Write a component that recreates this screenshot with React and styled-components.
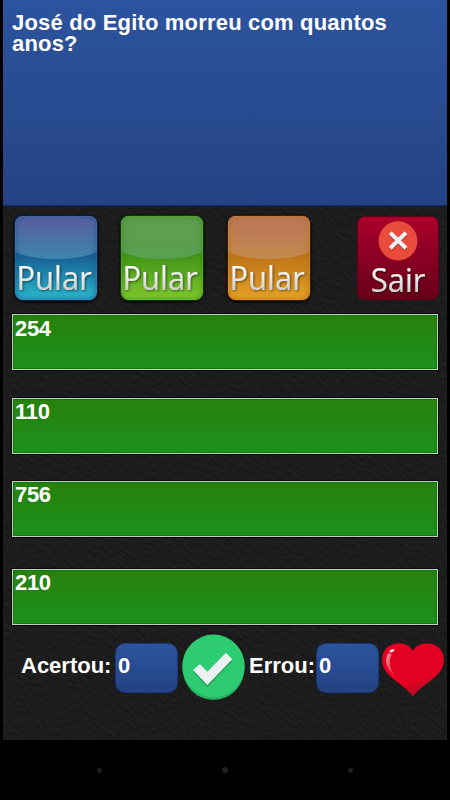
import React from 'react';
import styled, { createGlobalStyle } from 'styled-components';

const leather = encodeURIComponent(`
<svg xmlns="http://www.w3.org/2000/svg" width="444" height="740">
	<filter id="l" x="0" y="0" width="100%" height="100%" color-interpolation-filters="sRGB">
		<feTurbulence type="fractalNoise" baseFrequency="0.17 0.3" numOctaves="3" seed="8"/>
		<feDiffuseLighting surfaceScale="0.7" diffuseConstant="0.142" lighting-color="#ffffff">
			<feDistantLight azimuth="250" elevation="52"/>
		</feDiffuseLighting>
	</filter>
	<g transform="rotate(38 222 370)">
		<rect x="-300" y="-200" width="1050" height="1150" filter="url(#l)"/>
	</g>
</svg>`);

const COLORS = {
	blue: ['#5c5c9e', '#3c87ab', '#16568e', '#2ab3c9', '#0b1c3c'],
	green: ['#5f9d50', '#5a9f50', '#3b8f17', '#7dc62b', '#123507'],
	orange: ['#b9755a', '#c58a4c', '#b96f18', '#e3a024', '#3a1c08'],
};

const skips = ['blue', 'green', 'orange'];
const answers = ['254', '110', '756', '210'];

const App = () => {
	return (
		<Device>
			<GlobalStyle />
			<Game>
				<Question>José do Egito morreu com quantos anos?</Question>
				<Toolbar>
					{skips.map((tone) => (
						<SkipButton key={tone} $tone={COLORS[tone]}>
							<Label>Pular</Label>
						</SkipButton>
					))}
					<ExitButton>
						<CloseIcon />
						<Label $exit>Sair</Label>
					</ExitButton>
				</Toolbar>
				<Answers>
					{answers.map((answer) => (
						<Answer key={answer}>{answer}</Answer>
					))}
				</Answers>
				<Score>
					<ScoreLabel $width='94px'>Acertou:</ScoreLabel>
					<Counter>0</Counter>
					<CheckIcon />
					<ScoreLabel $width='67px'>Errou:</ScoreLabel>
					<Counter>0</Counter>
					<HeartIcon />
				</Score>
			</Game>
			<NavBar>
				<Dot />
				<Dot $size='6px' />
				<Dot />
			</NavBar>
		</Device>
	);
};

export default App;

const CloseIcon = () => (
	<CloseSvg viewBox='0 0 40 40'>
		<circle cx='20' cy='20.4' r='19.4' fill='#c9372f' />
		<circle cx='20' cy='19.6' r='19.3' fill='#e94b3c' />
		<path d='M12.3 13.3 28 28.5M28 13.3 12.3 28.5' stroke='#a72f2b' strokeWidth='3.8' />
		<path d='M12.2 11.8 28 27.2M28 11.8 12.2 27.2' stroke='#eef1f1' strokeWidth='4' />
	</CloseSvg>
);

const CheckIcon = () => (
	<CheckSvg viewBox='0 0 63 66'>
		<ellipse cx='31.5' cy='34' rx='31' ry='32' fill='#27ae60' />
		<ellipse cx='31.5' cy='32' rx='31.2' ry='31.5' fill='#2ecc71' />
		<path d='M11 38 18 32 25.3 39.7 44 20.7 50.3 27.3 25.3 53.3Z' fill='#25a65a' />
		<path d='M11 36 18 30 25.3 37.7 44 18.7 50.3 25.3 25.3 51Z' fill='#ecf0f1' />
	</CheckSvg>
);

const HeartIcon = () => (
	<HeartSvg viewBox='0 0 62 54'>
		<defs>
			<linearGradient id='heart' x1='0.35' y1='0.2' x2='0.65' y2='1'>
				<stop offset='0.62' stopColor='#e30022' />
				<stop offset='0.76' stopColor='#cf0823' />
				<stop offset='1' stopColor='#a80b20' />
			</linearGradient>
			<linearGradient id='shine' x1='0' y1='0' x2='0.5' y2='1'>
				<stop offset='0' stopColor='#f79aa4' />
				<stop offset='1' stopColor='#ea2840' />
			</linearGradient>
		</defs>
		<path
			d='M31 8C27-.6 14-2.4 5.5 4-1.8 10.5-1.2 22.5 4.6 29.5 11.6 38 24 44 31 53.2 38 44 50.4 38 57.4 29.5 63.2 22.5 63.8 10.5 56.5 4 48-2.4 35-.6 31 8Z'
			fill='url(#heart)'
		/>
		<path d='M6 10.5C2 17.5 4.3 27 12.5 32 7.5 25 6.5 17.5 9.8 11Z' fill='url(#shine)' />
		<ellipse cx='9.9' cy='7.8' rx='2.7' ry='1.4' transform='rotate(-25 9.9 7.8)' fill='#ffe1e4' />
	</HeartSvg>
);

const GlobalStyle = createGlobalStyle`
	* {
		box-sizing: border-box;
	}

	body {
		margin: 0;
		background: #000;
	}
`;

const Device = styled.div`
	width: 450px;
	height: 800px;
	display: flex;
	flex-direction: column;
	background: #000;
	overflow: hidden;
	font-family: 'Liberation Sans', Arial, sans-serif;
	font-size: 22px;
	font-weight: bold;
	line-height: 21px;
	color: #fff;
`;

const Game = styled.main`
	width: 444px;
	height: 740px;
	margin: 0 auto;
	display: flex;
	flex-direction: column;
	background: #1c1c1c url("data:image/svg+xml,${leather}");
`;

const Question = styled.header`
	height: 206px;
	padding: 13px 40px 0 9px;
	line-height: 20.5px;
	letter-spacing: 0.18px;
	background: linear-gradient(#2c549e, #244284);
	border-bottom: 1px solid #0d2b6e;
`;

const Toolbar = styled.div`
	height: 108px;
	padding: 9px 8px 0 11px;
	display: flex;
	gap: 22px;
`;

const SkipButton = styled.button`
	position: relative;
	width: 84px;
	height: 86px;
	padding: 0;
	display: flex;
	align-items: flex-end;
	justify-content: center;
	overflow: hidden;
	border: 1px solid ${({ $tone }) => $tone[4]};
	border-radius: 9px;
	background: linear-gradient(
		${({ $tone }) => `${$tone[2]} 0%, ${$tone[2]} 42%, ${$tone[3]} 96%`}
	);
	box-shadow: 0 1px 3px #000;

	&:nth-child(3) {
		margin-left: 1px;
	}

	/* glossy top half */
	&::before {
		content: '';
		position: absolute;
		top: 0;
		left: -8px;
		width: 98px;
		height: 43px;
		border-radius: 0 0 50% 50% / 0 0 16px 16px;
		background: linear-gradient(
			${({ $tone }) => `${$tone[0]}, ${$tone[1]}`}
		);
	}

	&::after {
		content: '';
		position: absolute;
		inset: 0;
		border-radius: 8px;
		box-shadow: inset 0 0 6px ${({ $tone }) => $tone[2]},
			inset 0 0 0 1px rgba(255, 255, 255, 0.12);
	}
`;

const ExitButton = styled.button`
	width: 82px;
	height: 84px;
	margin: 1px 0 0 auto;
	padding: 4px 0 0;
	display: flex;
	flex-direction: column;
	align-items: center;
	border: 1px solid #65001c;
	border-radius: 8px;
	background: linear-gradient(#ab002b, #67001a);
`;

const Label = styled.span`
	z-index: 1;
	margin-top: ${({ $exit }) => ($exit ? '-2px' : '0')};
	margin-right: ${({ $exit }) => ($exit ? '0' : '3px')};
	margin-bottom: ${({ $exit }) => ($exit ? '0' : '1px')};
	font-family: 'Open Sans', 'Noto Sans', sans-serif;
	font-size: 33px;
	font-weight: 400;
	line-height: 42px;
	color: transparent;
	background: linear-gradient(#fff 25%, #c9c9c9 85%);
	background-clip: text;
	-webkit-text-stroke: 0.2px rgba(235, 235, 235, 0.7);
	filter: drop-shadow(1px 1px 1px rgba(0, 0, 0, 0.5));
	transform: scaleX(0.94);
`;

const CloseSvg = styled.svg`
	flex: none;
	width: 40px;
	height: 40px;
`;

const Answers = styled.div`
	padding: 0 9px;
	display: flex;
	flex-direction: column;
	gap: 27px;
`;

const Answer = styled.button`
	height: 56px;
	padding: 2px;
	display: flex;
	align-items: flex-start;
	border: 1px solid #c4cfc2;
	background: linear-gradient(#28800c, #1c911d);
	box-shadow: 0 0 0 1px #080808, inset 0 0 0 1px #087f08;
	font: inherit;
	letter-spacing: -0.3px;
	color: inherit;

	&:first-child {
		margin-bottom: 1px;
		padding-top: 3px;
	}

	&:last-child {
		margin-top: 5px;
	}
`;

const Score = styled.footer`
	height: 66px;
	margin-top: 9px;
	padding-left: 18px;
	display: flex;
	align-items: flex-start;
`;

const ScoreLabel = styled.span`
	flex: none;
	width: ${({ $width }) => $width};
	padding-top: 21px;
	white-space: nowrap;
`;

const Counter = styled.div`
	flex: none;
	width: 63px;
	height: 50px;
	margin: 9px 4px 0 0;
	padding: 11px 2px;
	border: 1px solid #17377a;
	border-radius: 10px;
	background: linear-gradient(#2c549e, #244284);
`;

const CheckSvg = styled.svg`
	flex: none;
	width: 63px;
	height: 66px;
	margin-right: 4px;
`;

const HeartSvg = styled.svg`
	flex: none;
	width: 62px;
	height: 54px;
	margin: 9px 0 0 -1px;
`;

const NavBar = styled.nav`
	height: 60px;
	display: flex;
	align-items: center;
	justify-content: center;
	gap: 120px;
`;

const Dot = styled.i`
	width: ${({ $size = '5px' }) => $size};
	height: ${({ $size = '5px' }) => $size};
	border-radius: 50%;
	background: #202020;
`;
